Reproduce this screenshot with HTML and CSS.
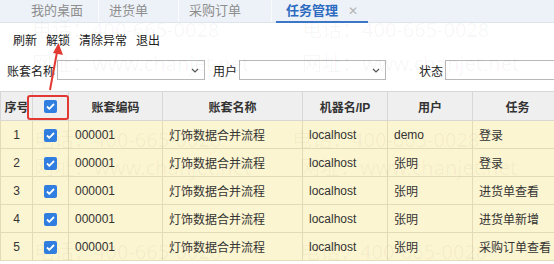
FILE: index.html
```html
<!DOCTYPE html>
<html lang="zh-CN">
<head>
    <meta charset="UTF-8">
    <meta name="viewport" content="width=device-width, initial-scale=1.0">
    <title>任务管理</title>
    <link rel="stylesheet" href="styles.css">
</head>
<body>
    <div class="tabs">
        <div class="tab">我的桌面</div>
        <div class="tab">进货单</div>
        <div class="tab">采购订单</div>
        <div class="tab active">任务管理<span class="close">✕</span></div>
    </div>

    <div class="toolbar">
        <span>刷新</span>
        <span>解锁</span>
        <span>清除异常</span>
        <span>退出</span>
    </div>

    <div class="filters">
        <label>账套名称</label>
        <div class="select wide">
            <svg class="chev" width="8" height="5" viewBox="0 0 8 5"><path d="M1 1l3 3 3-3" fill="none" stroke="#555" stroke-width="1.2"/></svg>
        </div>
        <label class="gap-s">用户</label>
        <div class="select">
            <svg class="chev" width="8" height="5" viewBox="0 0 8 5"><path d="M1 1l3 3 3-3" fill="none" stroke="#555" stroke-width="1.2"/></svg>
        </div>
        <label class="gap-l">状态</label>
        <div class="input"></div>
    </div>

    <div class="grid-wrap">
        <table class="grid">
            <colgroup>
                <col class="c-no"><col class="c-cb"><col class="c-code"><col class="c-name">
                <col class="c-host"><col class="c-user"><col class="c-task">
            </colgroup>
            <thead>
                <tr>
                    <th>序号</th>
                    <th><span class="cb"><svg width="9" height="7" viewBox="0 0 9 7"><path d="M1 3.5l2.3 2.3L8 1" fill="none" stroke="#fff" stroke-width="1.8"/></svg></span></th>
                    <th>账套编码</th>
                    <th>账套名称</th>
                    <th>机器名/IP</th>
                    <th>用户</th>
                    <th>任务</th>
                </tr>
            </thead>
            <tbody id="rows"></tbody>
        </table>
    </div>

    <div class="wm wm-1">电话：400-665-0028</div>
    <div class="wm wm-2">电话：400-665-0028</div>
    <div class="wm wm-3">网址：www.chanjet.net</div>
    <div class="wm wm-4">网址：www.chanjet.net</div>
    <div class="wm wm-5">电话：400-665-0028</div>
    <div class="wm wm-6">电话：400-665-0028</div>
    <div class="wm wm-7">网址：www.chanjet.net</div>
    <div class="wm wm-8">网址：www.chanjet.net</div>
    <div class="wm wm-9">电话：400-665-0028</div>
    <div class="wm wm-10">电话：400-665-0028</div>

    <div class="mark-box"></div>
    <svg class="mark-arrow" width="30" height="60" viewBox="0 0 30 60">
        <line x1="8" y1="48" x2="15" y2="10" stroke="#e23a32" stroke-width="2"/>
        <path d="M16.5 1L21 13 11 11z" fill="#e23a32"/>
    </svg>

    <script>
        const data = [
            [1, '000001', '灯饰数据合并流程', 'localhost', 'demo', '登录'],
            [2, '000001', '灯饰数据合并流程', 'localhost', '张明', '登录'],
            [3, '000001', '灯饰数据合并流程', 'localhost', '张明', '进货单查看'],
            [4, '000001', '灯饰数据合并流程', 'localhost', '张明', '进货单新增'],
            [5, '000001', '灯饰数据合并流程', 'localhost', '张明', '采购订单查看']
        ];

        const check = '<span class="cb"><svg width="9" height="7" viewBox="0 0 9 7"><path d="M1 3.5l2.3 2.3L8 1" fill="none" stroke="#fff" stroke-width="1.8"/></svg></span>';

        document.getElementById('rows').innerHTML = data.map(r =>
            `<tr>
                <td class="num">${r[0]}</td>
                <td class="mid">${check}</td>
                <td>${r[1]}</td>
                <td>${r[2]}</td>
                <td>${r[3]}</td>
                <td>${r[4]}</td>
                <td>${r[5]}</td>
            </tr>`
        ).join('');
    </script>
</body>
</html>
```

FILE: styles.css
```css
body {
    margin: 0;
    width: 554px;
    height: 264px;
    overflow: hidden;
    position: relative;
    background: #fff;
    font-family: "Liberation Sans", "Noto Sans CJK SC", sans-serif;
    font-size: 12px;
    color: #333;
}
.tabs {
    display: flex;
    height: 22px;
    padding-left: 21px;
    background: #edf2f8;
    border-bottom: 1px solid #dfe5ec;
}
.tab {
    position: relative;
    padding: 0 30px 0 10px;
    line-height: 22px;
    font-size: 13px;
    color: #8e8e8e;
    border-left: 1px solid #f9fbfd;
}
.tab:first-child {
    border-left: none;
    padding-right: 15px;
}
.tab.active {
    padding: 0 10px 0 14px;
    color: #2d6bc0;
    font-weight: bold;
}
.tab.active::after {
    content: "";
    position: absolute;
    left: 4px;
    right: 0;
    bottom: -1px;
    height: 2px;
    background: #3b77c6;
}
.close {
    margin-left: 10px;
    font-weight: normal;
    font-size: 12px;
    color: #b4b4b4;
}
.toolbar {
    display: flex;
    align-items: center;
    gap: 9px;
    height: 32px;
    padding-left: 13px;
    color: #222;
}
.filters {
    display: flex;
    align-items: center;
    height: 20px;
    padding: 5px 0 0 7px;
    color: #222;
}
.filters > * {
    flex-shrink: 0;
}
.filters label {
    margin-right: 2px;
    white-space: nowrap;
}
.filters .gap-s {
    margin-left: 8px;
}
.filters .gap-l {
    margin-left: 33px;
}
.select {
    position: relative;
    box-sizing: border-box;
    width: 147px;
    height: 20px;
    border: 1px solid #b8b8b8;
    background: #fff;
}
.select.wide {
    width: 148px;
}
.chev {
    position: absolute;
    right: 5px;
    top: 7px;
}
.input {
    box-sizing: border-box;
    width: 120px;
    height: 20px;
    border: 1px solid #b8b8b8;
}
.grid-wrap {
    margin-top: 11px;
    width: 554px;
    overflow: hidden;
}
.grid {
    width: 562px;
    table-layout: fixed;
    border-collapse: collapse;
}
.c-no { width: 32px; }
.c-cb { width: 36px; }
.c-code { width: 94px; }
.c-name { width: 140px; }
.c-host { width: 85px; }
.c-user { width: 85px; }
.c-task { width: 90px; }
.grid th {
    height: 28px;
    padding: 0;
    background: #efefef;
    border: 1px solid #d7d7d7;
    font-weight: bold;
    color: #333;
    text-align: center;
}
.grid td {
    height: 27px;
    padding: 0 0 0 6px;
    background: #fcf5d1;
    border: 1px solid #e3dbb8;
    color: #333;
    white-space: nowrap;
    overflow: hidden;
}
.grid td.num,
.grid td.mid {
    padding: 0;
    text-align: center;
}
.cb {
    display: inline-flex;
    align-items: center;
    justify-content: center;
    width: 13px;
    height: 13px;
    border-radius: 2px;
    background: #2f7ee0;
    vertical-align: middle;
}
.wm {
    position: absolute;
    white-space: nowrap;
    pointer-events: none;
    font-family: "Noto Sans", "Noto Sans CJK SC", sans-serif;
    font-size: 20px;
    color: rgba(0, 0, 0, 0.04);
}
.wm-1 { left: 32px; top: 14px; }
.wm-2 { left: 302px; top: 14px; }
.wm-3 { left: 32px; top: 48px; }
.wm-4 { left: 302px; top: 48px; }
.wm-5 { left: 34px; top: 124px; }
.wm-6 { left: 292px; top: 124px; }
.wm-7 { left: 34px; top: 152px; }
.wm-8 { left: 300px; top: 152px; }
.wm-9 { left: 34px; top: 236px; }
.wm-10 { left: 300px; top: 236px; }
.mark-box {
    position: absolute;
    left: 27px;
    top: 95px;
    width: 38px;
    height: 21px;
    border: 2px solid #e23a32;
    border-radius: 3px;
}
.mark-arrow {
    position: absolute;
    left: 42px;
    top: 42px;
}
```
